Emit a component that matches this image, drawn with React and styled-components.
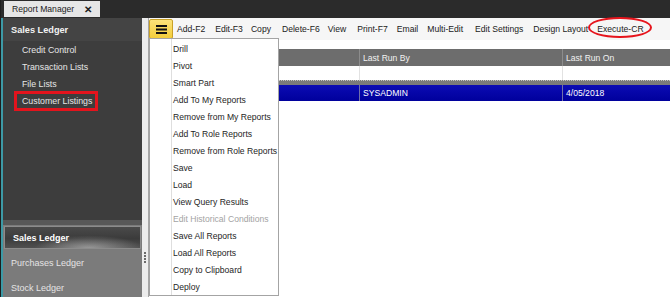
import React from 'react'
import styled, { createGlobalStyle } from 'styled-components'

const GlobalStyle = createGlobalStyle`
  html, body {
    margin: 0;
    padding: 0;
    background: #2b2b2b;
  }
  body {
    font-family: "Liberation Sans", Arial, sans-serif;
    font-size: 8.6px;
  }
`

const Frame = styled.div`
  width: 670px;
  height: 297px;
  overflow: hidden;
  display: flex;
  flex-direction: column;
  background: #2b2b2b;
  box-sizing: border-box;
  border-left: 1px solid #1e1e1e;
`

const TabBar = styled.div`
  height: 18px;
  flex: none;
  display: flex;
  align-items: flex-start;
  padding-left: 3px;
  box-sizing: border-box;
`

const Tab = styled.div`
  height: 16px;
  margin-top: 1px;
  display: flex;
  align-items: center;
  gap: 10px;
  padding: 0 8px;
  background: #e6e6e6;
  color: #1c1c1c;
  font-size: 8.6px;
`

const TabClose = styled.span`
  font-weight: bold;
  font-size: 10px;
`

const Body = styled.div`
  flex: 1;
  display: flex;
  min-height: 0;
  border-left: 2px solid #3d9aa6;
`

const Sidebar = styled.div`
  width: 139px;
  flex: none;
  display: flex;
  flex-direction: column;
  overflow: hidden;
`

const SideHeader = styled.div`
  height: 23px;
  flex: none;
  display: flex;
  align-items: center;
  padding-left: 8px;
  background: #444444;
  color: #f2f2f2;
  font-weight: bold;
  font-size: 9.2px;
`

const SideList = styled.div`
  height: 179px;
  flex: none;
  background: #3d3d3d;
`

const SideItem = styled.div`
  height: 17px;
  display: flex;
  align-items: center;
  padding-left: 19px;
  color: #e6e6e6;
  font-size: 8.8px;
`

const Marked = styled.span`
  margin-left: -8px;
  padding: 2px 3px 2px 5px;
  border: 3px solid #e3141d;
`

const NavPane = styled.div`
  flex: none;
  background: #7b7b7b;
  border-top: 5px solid #585858;
`

const NavButton = styled.div`
  height: 25px;
  display: flex;
  align-items: center;
  padding-left: 8px;
  color: ${p => (p.$active ? '#ffffff' : '#e4e4e4')};
  font-weight: ${p => (p.$active ? 'bold' : 'normal')};
  font-size: 9px;
  box-sizing: border-box;
  ${p =>
    p.$active &&
    `
    margin: 1px;
    height: 23px;
    border: 1px solid #8c8c8c;
    background:
      radial-gradient(ellipse 40% 60% at 62% 100%, rgba(210,210,210,0.55), rgba(210,210,210,0) 100%),
      linear-gradient(#4a4a4a, #3b3b3b 55%, #505050);
  `}
`

const Splitter = styled.div`
  width: 6px;
  flex: none;
  background: #ececec;
  display: flex;
  flex-direction: column;
  align-items: center;
  justify-content: flex-end;
  padding-bottom: 34px;
  box-sizing: border-box;
  gap: 1px;
`

const Dot = styled.span`
  width: 2px;
  height: 2px;
  background: #6a6a6a;
`

const Main = styled.div`
  flex: 1;
  position: relative;
  background: #ffffff;
  border-left: 1px solid #a6a6a6;
  display: flex;
  flex-direction: column;
  min-width: 0;
`

const Toolbar = styled.div`
  height: 22px;
  flex: none;
  display: flex;
  align-items: center;
  background: #f6f6f6;
  color: #1a1a1a;
`

const MenuButton = styled.div`
  width: 24px;
  height: 20px;
  box-sizing: border-box;
  margin-right: 4px;
  display: flex;
  align-items: center;
  justify-content: center;
  border: 1px solid #c9a126;
  border-radius: 2px;
  background: linear-gradient(#fbe27a, #f3cd3a);
`

const ToolItem = styled.div`
  position: relative;
  height: 22px;
  display: flex;
  align-items: center;
  margin-right: ${p => p.$gap ?? 10}px;
  white-space: nowrap;
`

const Ellipse = styled.span`
  position: absolute;
  top: -1px;
  left: -9px;
  right: -8px;
  height: 21px;
  border: 2.5px solid #e6141c;
  border-radius: 50%;
  box-sizing: border-box;
`

const Content = styled.div`
  flex: 1;
  padding-top: 9px;
`

const Row = styled.div`
  height: ${p => p.$h}px;
  display: grid;
  grid-template-columns: 211px 203px 1fr;
  box-sizing: border-box;
  background: ${p => p.$bg};
  color: ${p => p.$color || '#1a1a1a'};
`

const Cell = styled.div`
  display: flex;
  align-items: center;
  padding-left: 3px;
  border-right: 1px solid ${p => p.$line};
  white-space: nowrap;
`

const Divider = styled.div`
  height: 5px;
  background: #7a7a7a;
  border-top: 1px dotted #c4c4c4;
  box-sizing: border-box;
`

const Dropdown = styled.div`
  position: absolute;
  left: 0;
  top: 20px;
  width: 130px;
  height: 258px;
  box-sizing: border-box;
  padding-top: 1px;
  border: 1px solid #a4a4a4;
  background: linear-gradient(to right, #fff 21px, #dedede 21px, #dedede 22px, #fff 22px);
`

const MenuItem = styled.div`
  height: 17px;
  display: flex;
  align-items: center;
  padding-left: 23px;
  color: ${p => (p.$disabled ? '#a3a3a3' : '#1e1e1e')};
  white-space: nowrap;
`

const tools = [
  ['Add-F2', 10],
  ['Edit-F3', 8],
  ['Copy', 11],
  ['Delete-F6', 8],
  ['View', 11],
  ['Print-F7', 9],
  ['Email', 9],
  ['Multi-Edit', 12],
  ['Edit Settings', 10],
  ['Design Layout', 9],
]

const menu = [
  'Drill',
  'Pivot',
  'Smart Part',
  'Add To My Reports',
  'Remove from My Reports',
  'Add To Role Reports',
  'Remove from Role Reports',
  'Save',
  'Load',
  'View Query Results',
  'Edit Historical Conditions',
  'Save All Reports',
  'Load All Reports',
  'Copy to Clipboard',
  'Deploy',
]

function Hamburger() {
  return (
    <svg width="11" height="9" viewBox="0 0 11 9">
      <rect x="0" y="0" width="11" height="2" fill="#111" />
      <rect x="0" y="3.5" width="11" height="2" fill="#111" />
      <rect x="0" y="7" width="11" height="2" fill="#111" />
    </svg>
  )
}

export default function App() {
  return (
    <>
      <GlobalStyle />
      <Frame>
        <TabBar>
          <Tab>
            Report Manager
            <TabClose>✕</TabClose>
          </Tab>
        </TabBar>
        <Body>
          <Sidebar>
            <SideHeader>Sales Ledger</SideHeader>
            <SideList>
              <SideItem>Credit Control</SideItem>
              <SideItem>Transaction Lists</SideItem>
              <SideItem>File Lists</SideItem>
              <SideItem>
                <Marked>Customer Listings</Marked>
              </SideItem>
            </SideList>
            <NavPane>
              <NavButton $active>Sales Ledger</NavButton>
              <NavButton>Purchases Ledger</NavButton>
              <NavButton>Stock Ledger</NavButton>
            </NavPane>
          </Sidebar>
          <Splitter>
            <Dot />
            <Dot />
            <Dot />
            <Dot />
          </Splitter>
          <Main>
            <Toolbar>
              <MenuButton>
                <Hamburger />
              </MenuButton>
              {tools.map(([label, gap]) => (
                <ToolItem key={label} $gap={gap}>
                  {label}
                </ToolItem>
              ))}
              <ToolItem $gap={0}>
                Execute-CR
                <Ellipse />
              </ToolItem>
            </Toolbar>
            <Content>
              <Row $h={17} $bg="#6d6d6d" $color="#f2f2f2">
                <Cell $line="#8c8c8c" />
                <Cell $line="#8c8c8c">Last Run By</Cell>
                <Cell $line="transparent">Last Run On</Cell>
              </Row>
              <Row $h={14} $bg="#ffffff">
                <Cell $line="#e2e2e2" />
                <Cell $line="#e2e2e2" />
                <Cell $line="transparent" />
              </Row>
              <Divider />
              <Row $h={16} $bg="linear-gradient(#0b0bb4, #00009c)" $color="#ffffff">
                <Cell $line="#7070a8" />
                <Cell $line="#7070a8">SYSADMIN</Cell>
                <Cell $line="transparent">4/05/2018</Cell>
              </Row>
            </Content>
            <Dropdown>
              {menu.map(item => (
                <MenuItem key={item} $disabled={item === 'Edit Historical Conditions'}>
                  {item}
                </MenuItem>
              ))}
            </Dropdown>
          </Main>
        </Body>
      </Frame>
    </>
  )
}
